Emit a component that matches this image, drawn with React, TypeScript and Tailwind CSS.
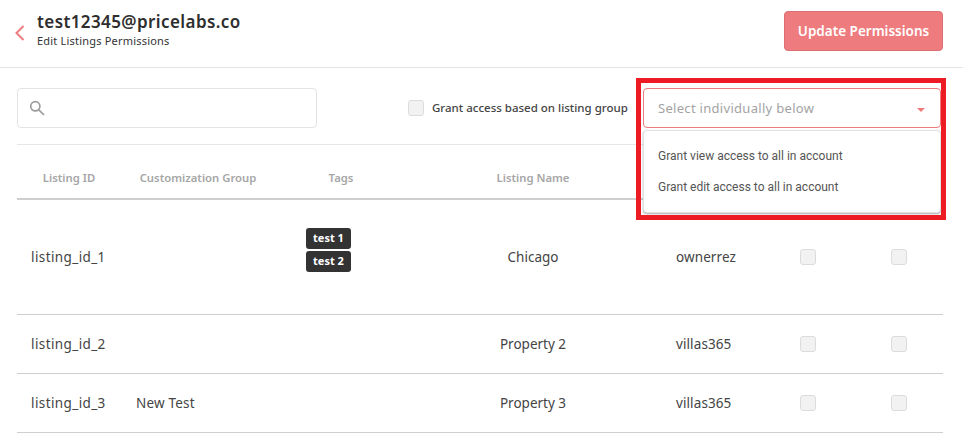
import React from 'react'

const cols = 'grid grid-cols-[104px_154px_132px_252px_102px_94px_88px]'

const rows = [
  { id: 'listing_id_1', group: '', tags: ['test 1', 'test 2'], name: 'Chicago', pms: 'ownerrez', h: 'h-[115px]' },
  { id: 'listing_id_2', group: '', tags: [], name: 'Property 2', pms: 'villas365', h: 'h-[59px]' },
  { id: 'listing_id_3', group: 'New Test', tags: [], name: 'Property 3', pms: 'villas365', h: 'h-[59px]' },
]

function Box() {
  return <div className="h-4 w-4 rounded-[3px] border border-[#dcdcdc] bg-[#f2f2f2]" />
}

function App() {
  return (
    <div className="relative h-[439px] w-[963px] overflow-hidden bg-white font-['Noto_Sans',sans-serif] text-[#333]">
      <header className="flex h-[68px] items-start justify-between border-b border-[#e3e3e3] pl-[15px] pr-5">
        <div className="flex items-center pt-[11px]">
          <svg width="10" height="16" viewBox="0 0 10 16" fill="none" stroke="#ee7b7e" strokeWidth="2" className="mt-[5px]">
            <path d="M8.5 1 L1.5 8 L8.5 15" />
          </svg>
          <div className="ml-3">
            <div className="text-[17px] leading-[22px] font-semibold tracking-[0.4px] text-[#2e2e2e]">test12345@pricelabs.co</div>
            <div className="text-[11px] leading-[16px] tracking-[0.2px] text-[#333]">Edit Listings Permissions</div>
          </div>
        </div>
        <button className="mt-[11px] h-10 w-[159px] rounded border border-[#dd6f72] bg-[#ee7b7e] text-[13.5px] font-semibold text-white">
          Update Permissions
        </button>
      </header>

      <div className="pl-[17px] pr-5">
        <div className="flex h-[77px] items-start border-b border-[#e6e6e6] pt-5">
          <div className="flex h-10 w-[300px] items-center rounded border border-[#e3e3e3] pl-[11px]">
            <svg width="16" height="16" viewBox="0 0 16 16" fill="none" stroke="#9b9b9b" strokeWidth="1.7">
              <circle cx="6.3" cy="6.3" r="4.6" />
              <path d="M9.8 9.8 L15 15" />
            </svg>
          </div>
          <label className="ml-[91px] flex h-10 items-center gap-2">
            <Box />
            <span className="text-[11.5px] font-medium text-[#444]">Grant access based on listing group</span>
          </label>
          <div className="relative ml-auto mr-[2px] flex h-10 w-[298px] items-center justify-between rounded border border-[#ee7b7e] pl-[14px] pr-[15px]">
            <span className="pt-[1px] text-[13px] tracking-[0.3px] text-[#a3a3a3]">Select individually below</span>
            <span className="mt-1 h-0 w-0 border-x-[4px] border-t-[4px] border-x-transparent border-t-[#ee7b7e]" />
          </div>
        </div>

        <div className={`${cols} h-[55px] items-center border-b-2 border-[#cfcfcf] pt-[13px] text-center text-[11.3px] font-semibold text-[#a6a6a6]`}>
          <div>Listing ID</div>
          <div>Customization Group</div>
          <div>Tags</div>
          <div>Listing Name</div>
        </div>

        {rows.map((r) => (
          <div key={r.id} className={`${cols} ${r.h} items-center border-b border-[#cfcfcf] text-[13.5px] text-[#444]`}>
            <div className="pl-[14px] tracking-[0.4px]">{r.id}</div>
            <div className="pl-[15px] tracking-[0.2px]">{r.group}</div>
            <div className="mb-[14px] flex flex-col items-start gap-[2px] pl-[31px]">
              {r.tags.map((t) => (
                <span key={t} className="flex h-[21px] w-[45px] items-center justify-center rounded-[3px] bg-[#333] text-[11px] font-bold text-white">
                  {t}
                </span>
              ))}
            </div>
            <div className="text-center">{r.name}</div>
            <div className="pl-[17px] tracking-[0.1px]">{r.pms}</div>
            <div className="flex justify-center"><Box /></div>
            <div className="flex justify-center"><Box /></div>
          </div>
        ))}
      </div>

      {/* open menu + red callout sit on top of the table */}
      <div className="absolute left-[643px] top-[130px] flex h-[83px] w-[298px] flex-col justify-center gap-[14px] rounded border border-[#e3e3e3] bg-white px-[14px] font-['Roboto',sans-serif] text-[12px] leading-[17px] text-[#555] shadow-[0_1px_2px_rgba(0,0,0,0.35)]">
        <div>Grant view access to all in account</div>
        <div>Grant edit access to all in account</div>
      </div>
      <div className="pointer-events-none absolute left-[636px] top-[78px] h-[142px] w-[310px] border-[5px] border-[#ed1c24]" />
    </div>
  )
}

export default App
